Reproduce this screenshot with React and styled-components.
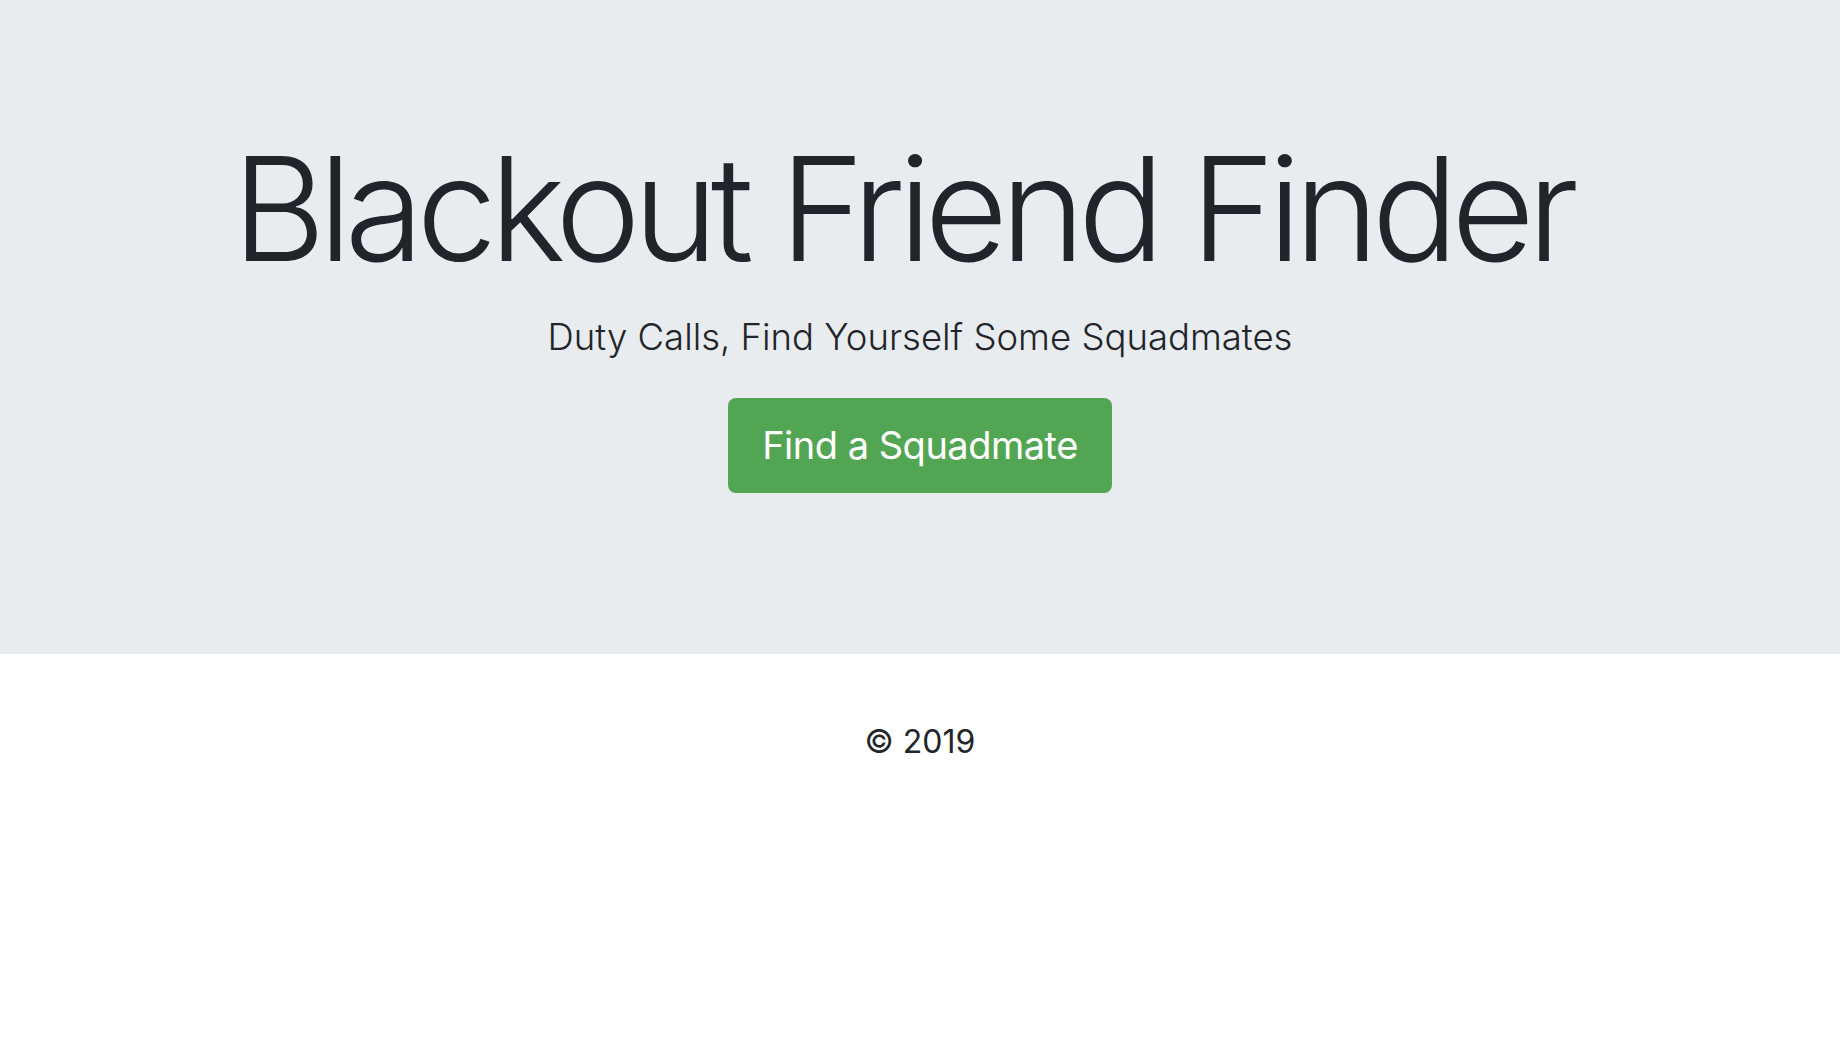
import React from 'react';
import styled, { createGlobalStyle } from 'styled-components';

const GlobalStyle = createGlobalStyle`
  html, body {
    margin: 0;
    padding: 0;
    background: #fff;
    color: #212529;
    font-family: Inter, "Noto Sans", sans-serif;
  }
`;

const Jumbotron = styled.header`
  background: #e9ecef;
  height: 654px;
  box-sizing: border-box;
  padding-top: 123px;
  display: flex;
  flex-direction: column;
  align-items: center;
  text-align: center;
`;

const Title = styled.h1`
  margin: 0;
  padding-right: 36px;
  font-size: 144px;
  font-weight: 300;
  line-height: 1.2;
  letter-spacing: -7.3px;
`;

const Lead = styled.p`
  margin: 14px 0 0;
  font-size: 36.5px;
  font-weight: 300;
  line-height: 1.5;
`;

const Button = styled.a`
  margin-top: 33px;
  display: inline-block;
  background: #52a552;
  color: #fff;
  font-size: 38px;
  font-weight: 400;
  line-height: 95px;
  padding: 0 34px;
  border-radius: 8px;
  letter-spacing: -0.5px;
  text-decoration: none;
`;

const Footer = styled.footer`
  padding-top: 64px;
  text-align: center;
  font-size: 32px;
  line-height: 1.5;
`;

export default function App() {
  return (
    <>
      <GlobalStyle />
      <Jumbotron>
        <Title>Blackout Friend Finder</Title>
        <Lead>Duty Calls, Find Yourself Some Squadmates</Lead>
        <Button href="#">Find a Squadmate</Button>
      </Jumbotron>
      <Footer>© 2019</Footer>
    </>
  );
}
